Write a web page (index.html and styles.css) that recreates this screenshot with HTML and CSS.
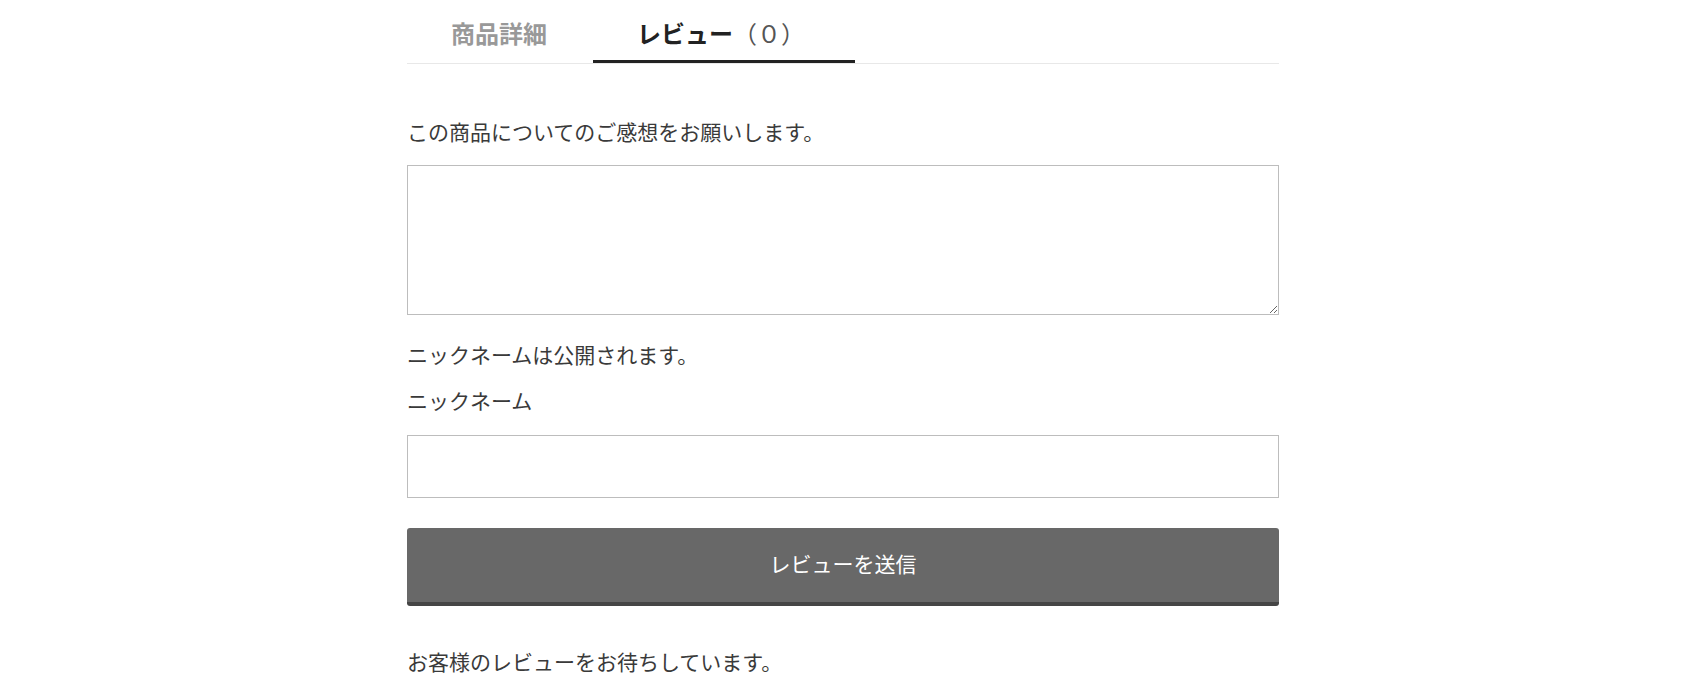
FILE: index.html
```html
<!DOCTYPE html>
<html lang="ja">
<head>
    <meta charset="UTF-8">
    <meta name="viewport" content="width=device-width, initial-scale=1.0">
    <title>レビュー</title>
    <link rel="stylesheet" href="styles.css">
</head>
<body>

<div class="container">
    <!-- Tabs -->
    <ul class="tabs">
        <li class="tab tab-detail">商品詳細</li>
        <li class="tab tab-review active">レビュー<span class="count">（０）</span></li>
    </ul>

    <!-- Review Form -->
    <form class="review-form" id="reviewForm">
        <p class="note">この商品についてのご感想をお願いします。</p>
        <textarea name="comment" id="comment"></textarea>

        <p class="note note-public">ニックネームは公開されます。</p>
        <label for="nickname" class="note">ニックネーム</label>
        <input type="text" name="nickname" id="nickname">

        <button type="submit">レビューを送信</button>
    </form>

    <p class="note wait">お客様のレビューをお待ちしています。</p>
</div>

</body>
</html>
```

FILE: styles.css
```css
body {
    font-family: "Noto Sans CJK JP", "Noto Sans", sans-serif;
    background-color: #fff;
    color: #333;
    margin: 0;
    padding: 0;
}
.container {
    width: 872px;
    margin: 0 0 0 407px;
}
.tabs {
    display: flex;
    list-style: none;
    margin: 0;
    padding: 0;
    border-bottom: 1px solid #e8e8e8;
}
.tab {
    box-sizing: border-box;
    height: 63px;
    padding: 21px 0 0 44px;
    font-size: 24px;
    line-height: 24px;
    font-weight: bold;
    color: #999;
    border-bottom: 3px solid transparent;
}
.tab-detail {
    width: 186px;
}
.tab-review {
    width: 262px;
}
.tab.active {
    color: #222;
    border-bottom-color: #222;
}
.tab .count {
    font-weight: normal;
    color: #555;
}
.review-form {
    display: flex;
    flex-direction: column;
    padding-top: 52px;
}
.note {
    display: block;
    margin: 0;
    font-size: 21px;
    line-height: 30px;
    color: #3a3a3a;
}
textarea, input[type="text"] {
    box-sizing: border-box;
    width: 100%;
    border: 1px solid #bdbdbd;
    border-radius: 0;
    font-family: inherit;
    font-size: 18px;
    padding: 8px 12px;
    outline: none;
}
textarea {
    height: 150px;
    margin: 19px 0 24px;
    resize: vertical;
}
.note-public {
    margin-bottom: 16px;
}
input[type="text"] {
    height: 63px;
    margin-top: 20px;
}
button {
    height: 78px;
    margin-top: 30px;
    background-color: #686868;
    color: #fff;
    border: none;
    border-bottom: 4px solid #454545;
    border-radius: 3px;
    font-family: inherit;
    font-size: 21px;
    padding: 0 0 4px;
    cursor: pointer;
}
button:hover {
    background-color: #5a5a5a;
}
.wait {
    margin-top: 40px;
}
```
